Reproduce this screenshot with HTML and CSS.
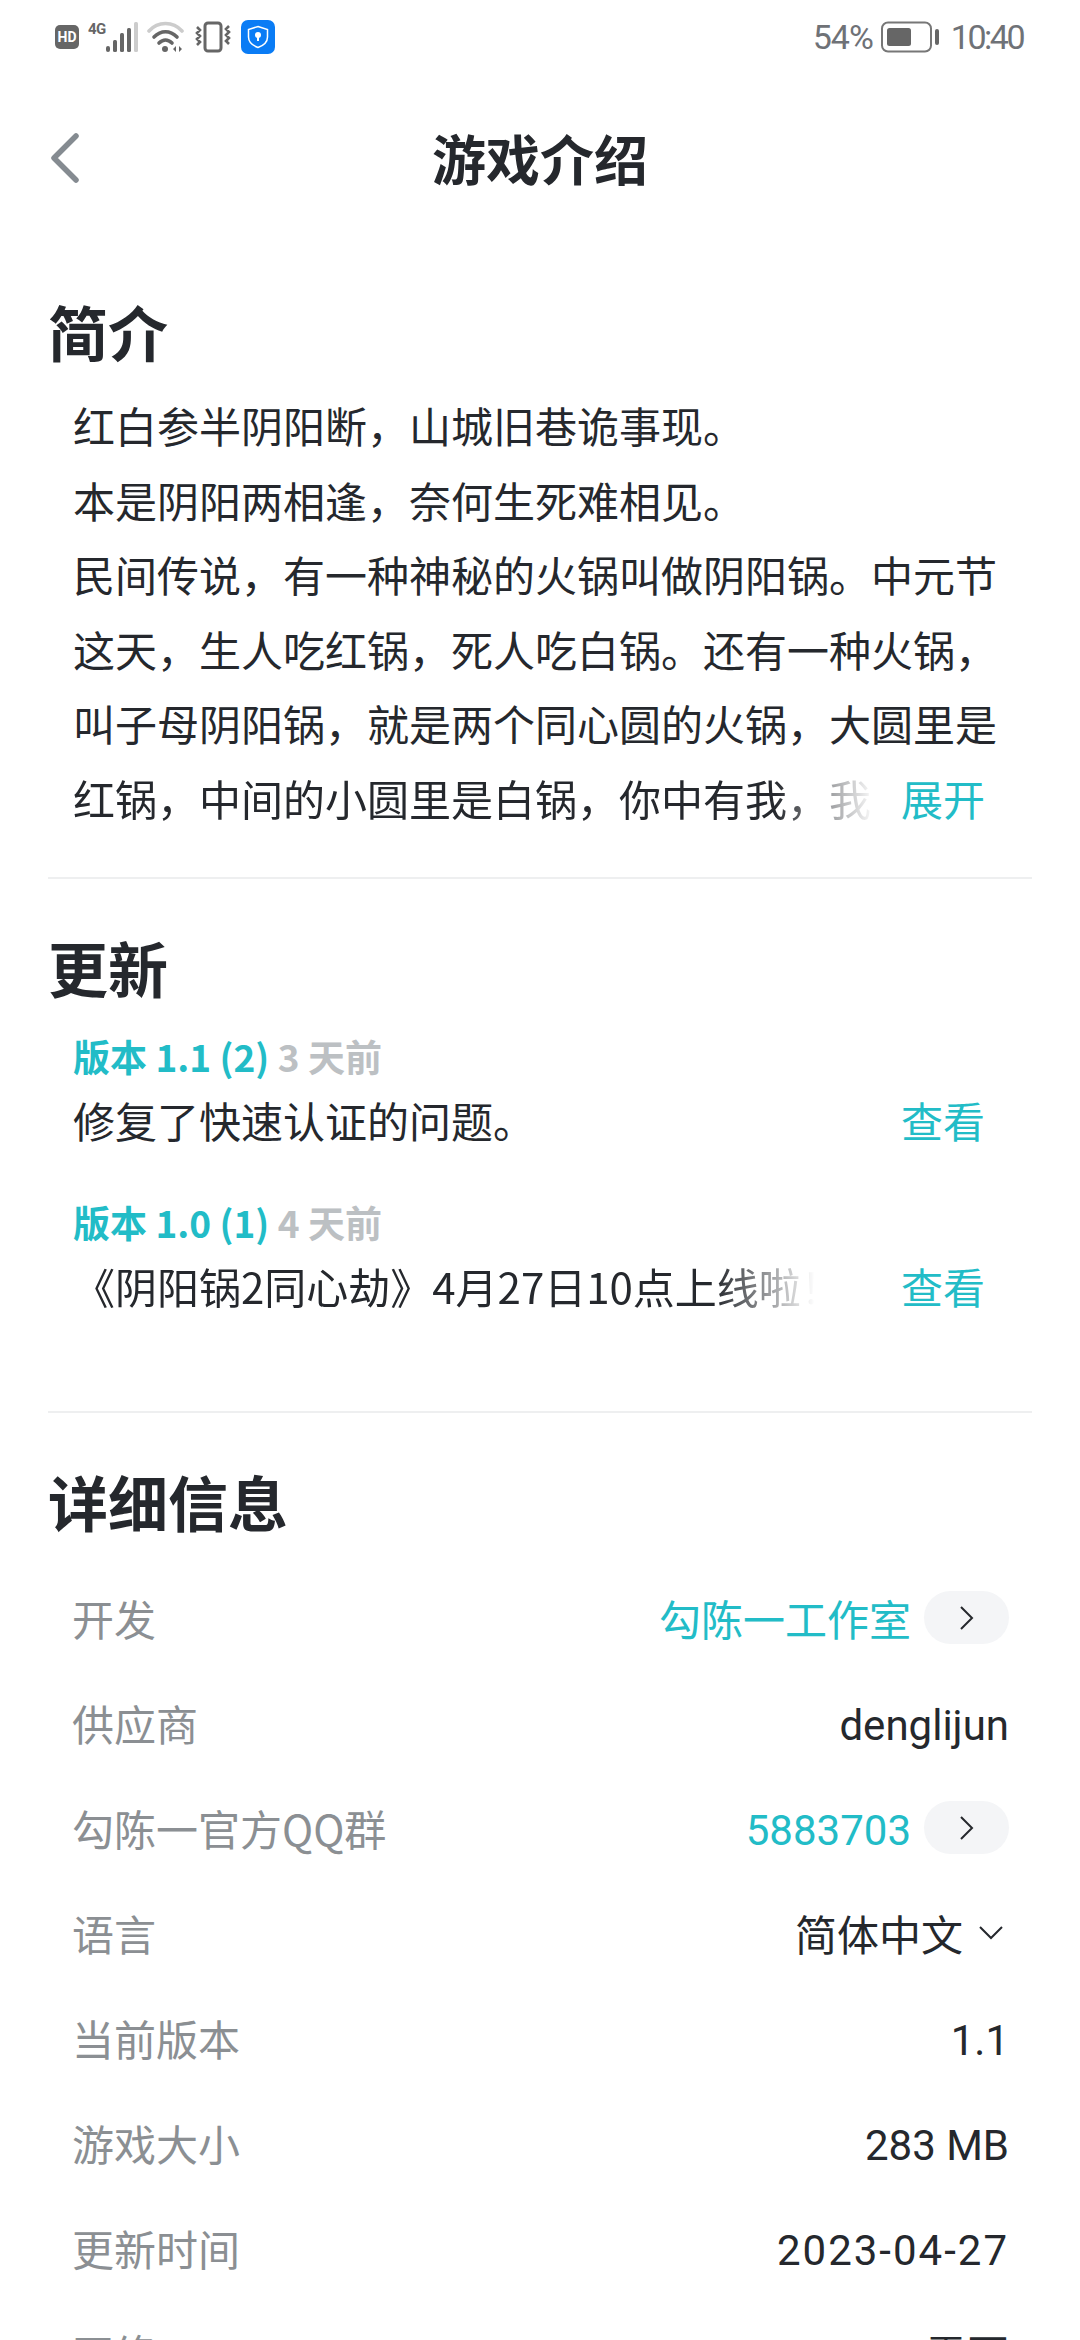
FILE: index.html
```html
<!DOCTYPE html>
<html lang="zh-CN">

<head>
    <meta charset="UTF-8">
    <meta name="viewport" content="width=device-width, initial-scale=1.0">
    <title>游戏介绍</title>
    <link rel="stylesheet" href="styles.css">
</head>

<body>
    <div class="statusbar">
        <div class="status-left">
            <svg width="24" height="24" viewBox="0 0 24 24">
                <rect width="24" height="24" rx="5" fill="#666"/>
                <text x="12" y="17" text-anchor="middle" font-size="14" font-weight="700" fill="#fff" font-family="Roboto">HD</text>
            </svg>
            <svg width="50" height="32" viewBox="0 0 50 32">
                <text x="0" y="13" font-size="15" font-weight="700" fill="#666" font-family="Roboto" letter-spacing="-0.500">4G</text>
                <rect x="18" y="25" width="4" height="6" rx="2" fill="#666"/>
                <rect x="25" y="19" width="4" height="12" rx="1.500" fill="#666"/>
                <rect x="32" y="12" width="4" height="19" rx="1.500" fill="#666"/>
                <rect x="39" y="7" width="4" height="24" rx="1.500" fill="#666"/>
                <rect x="46" y="1" width="4" height="30" rx="1.500" fill="#ccc"/>
            </svg>
            <svg width="38" height="32" viewBox="0 0 38 32">
                <path d="M2 10C11 0 26 0 35 10" fill="none" stroke="#ccc" stroke-width="3.600" stroke-linecap="round"/>
                <path d="M7 16C14 9 23 9 30 16" fill="none" stroke="#666" stroke-width="3.600" stroke-linecap="round"/>
                <path d="M12 22C16 18 21 18 25 22" fill="none" stroke="#666" stroke-width="3.600" stroke-linecap="round"/>
                <circle cx="18" cy="28" r="3" fill="#666"/>
                <path d="M29 25v6l-3-3zM32 25v6l3-3z" fill="#666"/>
            </svg>
            <svg width="38" height="32" viewBox="0 0 38 32">
                <rect x="11" y="2" width="16" height="28" rx="3" fill="none" stroke="#666" stroke-width="3"/>
                <path d="M3 6l3 3-3 3 3 3-3 3 3 3-3 3M35 5l-3 3 3 3-3 3 3 3-3 3 3 3" fill="none" stroke="#666" stroke-width="2.600"/>
            </svg>
            <svg width="34" height="34" viewBox="0 0 34 34">
                <rect width="34" height="34" rx="7" fill="#0a7cf5"/>
                <path d="M17 6.500l9.500 3v7.500c0 5-4 8.500-9.500 10.500-5.500-2-9.500-5.500-9.500-10.500V9.500z" fill="none" stroke="#fff" stroke-width="1.500"/>
                <circle cx="17" cy="15" r="3" fill="#fff"/>
                <rect x="16" y="15" width="2" height="6" fill="#fff"/>
            </svg>
        </div>
        <div class="status-right">
            <span class="status-battery">54%</span>
            <svg class="battery" width="58" height="32" viewBox="0 0 58 32">
                <rect x="1" y="1.500" width="49" height="29" rx="6" fill="none" stroke="#777" stroke-width="2"/>
                <rect x="6" y="7" width="24" height="18" rx="2.500" fill="#666"/>
                <rect x="54" y="8" width="4" height="16" rx="2" fill="#666"/>
            </svg>
            <span class="status-time">10:40</span>
        </div>
    </div>

    <div class="navbar">
        <svg class="back" width="30" height="50" viewBox="0 0 30 50">
            <path d="M26 3L4 25l22 22" fill="none" stroke="#858b91" stroke-width="5.500" stroke-linecap="round" stroke-linejoin="round"/>
        </svg>
        <h1 class="page-title">游戏介绍</h1>
    </div>

    <section class="section intro">
        <h2 class="section-title">简介</h2>
        <div class="intro-text">
            <p>红白参半阴阳断，山城旧巷诡事现。</p>
            <p>本是阴阳两相逢，奈何生死难相见。</p>
            <p>民间传说，有一种神秘的火锅叫做阴阳锅。中元节</p>
            <p>这天，生人吃红锅，死人吃白锅。还有一种火锅，</p>
            <p>叫子母阴阳锅，就是两个同心圆的火锅，大圆里是</p>
            <div class="line-more">
                <p class="fade-line">红锅，中间的小圆里是白锅，你中有我，我</p>
                <a class="link">展开</a>
            </div>
        </div>
    </section>

    <section class="section updates">
        <h2 class="section-title">更新</h2>
        <div class="update">
            <div class="update-head"><b>版本 1.1 (2)</b> <span>3 天前</span></div>
            <div class="line-more">
                <p>修复了快速认证的问题。</p>
                <a class="link">查看</a>
            </div>
        </div>
        <div class="update">
            <div class="update-head"><b>版本 1.0 (1)</b> <span>4 天前</span></div>
            <div class="line-more">
                <p class="fade-line short">《阴阳锅2同心劫》4月27日10点上线啦！</p>
                <a class="link">查看</a>
            </div>
        </div>
    </section>

    <section class="section details">
        <h2 class="section-title">详细信息</h2>
        <div class="info-list">
            <div class="info-row">
                <span class="info-label">开发</span>
                <span class="info-value accent">勾陈一工作室<i class="pill"><svg width="15" height="26" viewBox="0 0 15 26"><path d="M2 2l11 11L2 24" fill="none" stroke="#25282d" stroke-width="2"/></svg></i></span>
            </div>
            <div class="info-row">
                <span class="info-label">供应商</span>
                <span class="info-value latin">denglijun</span>
            </div>
            <div class="info-row">
                <span class="info-label">勾陈一官方QQ群</span>
                <span class="info-value accent"><span class="latin">5883703</span><i class="pill"><svg width="15" height="26" viewBox="0 0 15 26"><path d="M2 2l11 11L2 24" fill="none" stroke="#25282d" stroke-width="2"/></svg></i></span>
            </div>
            <div class="info-row">
                <span class="info-label">语言</span>
                <span class="info-value">简体中文<svg class="caret" width="24" height="14" viewBox="0 0 24 14"><path d="M1 1l11 11L23 1" fill="none" stroke="#25282d" stroke-width="2"/></svg></span>
            </div>
            <div class="info-row">
                <span class="info-label">当前版本</span>
                <span class="info-value latin">1.1</span>
            </div>
            <div class="info-row">
                <span class="info-label">游戏大小</span>
                <span class="info-value latin">283 MB</span>
            </div>
            <div class="info-row">
                <span class="info-label">更新时间</span>
                <span class="info-value latin date">2023-04-27</span>
            </div>
            <div class="info-row">
                <span class="info-label">网络</span>
                <span class="info-value">需要</span>
            </div>
        </div>
    </section>
</body>

</html>
```

FILE: styles.css
```css
* {
    box-sizing: border-box;
}

html,
body {
    margin: 0;
    padding: 0;
    background: #fff;
}

body {
    width: 1080px;
    height: 2340px;
    overflow: hidden;
    font-family: 'Noto Sans CJK SC', 'Noto Sans', sans-serif;
    color: #25282d;
}

p,
h1,
h2 {
    margin: 0;
}

.statusbar {
    height: 76px;
    padding: 20px 57px 0 55px;
    display: flex;
    justify-content: space-between;
    align-items: flex-start;
}

.status-left {
    display: flex;
    align-items: center;
    gap: 9px;
}

.status-right {
    display: flex;
    align-items: center;
    gap: 8px;
    font-family: Roboto, sans-serif;
    font-size: 34px;
    line-height: 34px;
    color: #6f7277;
}

.status-battery {
    letter-spacing: -1px;
}

.status-time {
    margin-left: 4px;
    letter-spacing: -2.5px;
}

.navbar {
    height: 164px;
    position: relative;
    display: flex;
    align-items: center;
    justify-content: center;
}

.back {
    position: absolute;
    left: 50px;
    top: 57px;
}

.page-title {
    font-size: 54px;
    font-weight: 700;
    line-height: 76px;
}

.section {
    margin: 0 48px;
    border-bottom: 2px solid #eeeff0;
}

.section-title {
    font-size: 60px;
    font-weight: 700;
    line-height: 84px;
}

.intro {
    padding-top: 49px;
    height: 639px;
}

.intro-text {
    padding: 15px 0 0 25px;
    font-size: 42px;
    line-height: 74.6px;
}

.line-more {
    display: flex;
    justify-content: space-between;
    padding-right: 47px;
}

.link {
    color: #22bcc7;
}

.fade-line {
    width: 802px;
    white-space: nowrap;
    overflow: hidden;
    -webkit-mask-image: linear-gradient(90deg, #000 calc(100% - 100px), transparent 100%);
    mask-image: linear-gradient(90deg, #000 calc(100% - 100px), transparent 100%);
}

.fade-line.short {
    width: 742px;
}

.updates {
    padding-top: 46px;
    height: 534px;
}

.update {
    padding-left: 25px;
    margin-bottom: 46px;
}

.section-title + .update {
    margin-top: 22px;
}

.update-head {
    font-size: 37px;
    font-weight: 700;
    line-height: 50px;
    color: #22bcc7;
}

.update-head span {
    color: #bcc0c3;
}

.update-head b {
    font-weight: 700;
}

.update .line-more {
    margin-top: 8px;
    font-size: 42px;
    line-height: 62px;
}

.details {
    padding-top: 46px;
    border-bottom: 0;
}

.info-list {
    margin-top: 22px;
}

.info-row {
    height: 105px;
    padding: 0 23px 0 24px;
    display: flex;
    justify-content: space-between;
    align-items: center;
    font-size: 42px;
}

.info-label {
    color: #8b8f93;
}

.info-value {
    display: flex;
    align-items: center;
    font-family: Roboto, 'Noto Sans CJK SC', sans-serif;
}

.latin {
    margin-top: 6px;
}

.date {
    letter-spacing: 2px;
}

.accent {
    color: #22bcc7;
}

.pill {
    width: 85px;
    height: 53px;
    margin-left: 13px;
    border-radius: 27px;
    background: #f4f5f7;
    display: flex;
    align-items: center;
    justify-content: center;
}

.caret {
    margin-left: 16px;
    margin-right: 6px;
}
```
